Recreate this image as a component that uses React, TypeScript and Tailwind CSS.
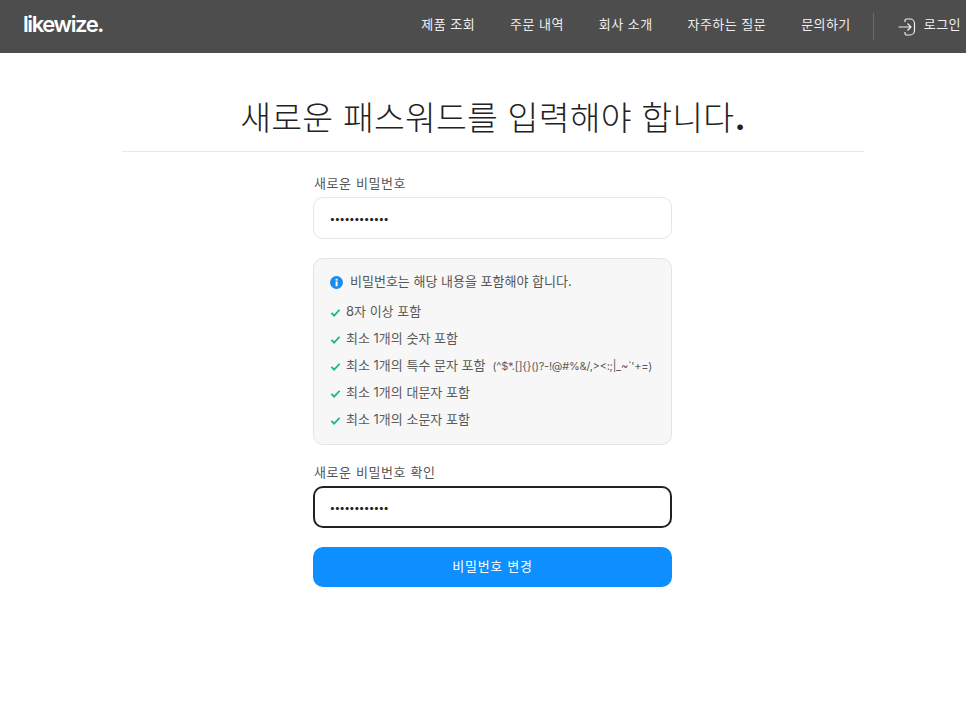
import React from "react";

const nav = ["제품 조회", "주문 내역", "회사 소개", "자주하는 질문", "문의하기"];
const reqs: [string, string?][] = [
  ["8자 이상 포함"],
  ["최소 1개의 숫자 포함"],
  ["최소 1개의 특수 문자 포함", "(^$*.[]{}()?-!@#%&/,><:;|_~`'+=)"],
  ["최소 1개의 대문자 포함"],
  ["최소 1개의 소문자 포함"],
];

function Check() {
  return (
    <svg width="11" height="11" viewBox="0 0 12 12" fill="none" className="shrink-0">
      <path d="M1.5 6.5 L4.5 9.5 L10.5 3" stroke="#1fb58f" strokeWidth="2" />
    </svg>
  );
}

function Dots() {
  return <span className="text-[10px] tracking-[0.15px] font-bold text-[#222] leading-none">••••••••••••</span>;
}

export default function App() {
  return (
    <div className="min-h-[707px] bg-white text-[#333] font-['Inter','Noto_Sans_CJK_KR',sans-serif]">
      <header className="h-[53px] bg-[#4d4d4d] flex items-center justify-between pl-[23px] pr-[5px]">
        <div className="text-white text-[22px] font-semibold tracking-[-1.4px] pb-[4px]">likewize.</div>
        <nav className="flex items-center text-[#f0f0f0] text-[13px] tracking-[0.45px]">
          <div className="flex gap-[35px] pb-[3px]">
            {nav.map((n) => (
              <span key={n}>{n}</span>
            ))}
          </div>
          <div className="w-px h-[27px] bg-[#6a6a6a] ml-[22px] mr-[24px]" />
          <div className="flex items-center gap-[6px]">
            <svg width="20" height="20" viewBox="0 0 20 20" fill="none" stroke="#f0f0f0" strokeWidth="1.2">
              <path d="M0.5 10 H13 M9.5 6.5 L13 10 L9.5 13.5" />
              <path d="M7 5 V3.5 A 1.5 1.5 0 0 1 8.5 2 H12 C14.5 2 16.5 4 16.5 6.5 V13.5 C16.5 16 14.5 18 12 18 H8.5 A1.5 1.5 0 0 1 7 16.5 V15" />
            </svg>
            <span className="pb-[3px]">로그인</span>
          </div>
        </nav>
      </header>
      <main className="w-[742px] ml-[122px]">
        <h1 className="text-[33.5px] leading-[40px] text-center font-light text-[#222] pt-[45px] border-b border-[#e8e8e8] h-[99px] tracking-[0.2px]">
          새로운 패스워드를 입력해야 합니다<span className="font-bold">.</span>
        </h1>
        <form className="w-[359px] ml-[191px] pt-[22px]">
          <label className="block text-[13px] leading-[18px] text-[#555] pl-px mb-[5px] tracking-[0.6px]">새로운 비밀번호</label>
          <div className="h-[42px] rounded-[10px] border border-[#e6e6e6] flex items-center pl-[16px]"><Dots /></div>
          <div className="mt-[19px] h-[187px] rounded-[10px] border border-[#e4e4e4] bg-[#f7f7f7] pl-[16px] pt-[13px]">
            <div className="flex items-center gap-[7px] text-[13px] h-[20px] text-[#555]">
              <svg width="13" height="13" viewBox="0 0 14 14">
                <circle cx="7" cy="7" r="7" fill="#1a8cec" />
                <rect x="6" y="6" width="2.2" height="5" fill="white" />
                <rect x="6" y="3" width="2.2" height="2" fill="white" />
              </svg>
              <span className="pb-[1px]">비밀번호는 해당 내용을 포함해야 합니다.</span>
            </div>
            <ul className="mt-[7px]">
              {reqs.map(([r, s]) => (
                <li key={r} className="flex items-center gap-[5px] h-[27px] text-[13px] text-[#5a5a5a] whitespace-nowrap">
                  <Check />
                  <span className="pb-[1px]">{r}{s ? <span className="text-[11px] tracking-[-0.24px] ml-[7px]">{s}</span> : null}</span>
                </li>
              ))}
            </ul>
          </div>
          <label className="block text-[13px] leading-[18px] text-[#555] pl-px mt-[18px] mb-[5px] tracking-[0.6px]">새로운 비밀번호 확인</label>
          <div className="h-[42px] rounded-[10px] border-2 border-[#222] flex items-center pl-[15px]"><Dots /></div>
          <button type="button" className="mt-[19px] w-full h-[40px] rounded-[10px] bg-[#0d8fff] text-white text-[13px] tracking-[0.7px]">비밀번호 변경</button>
        </form>
      </main>
    </div>
  );
}
